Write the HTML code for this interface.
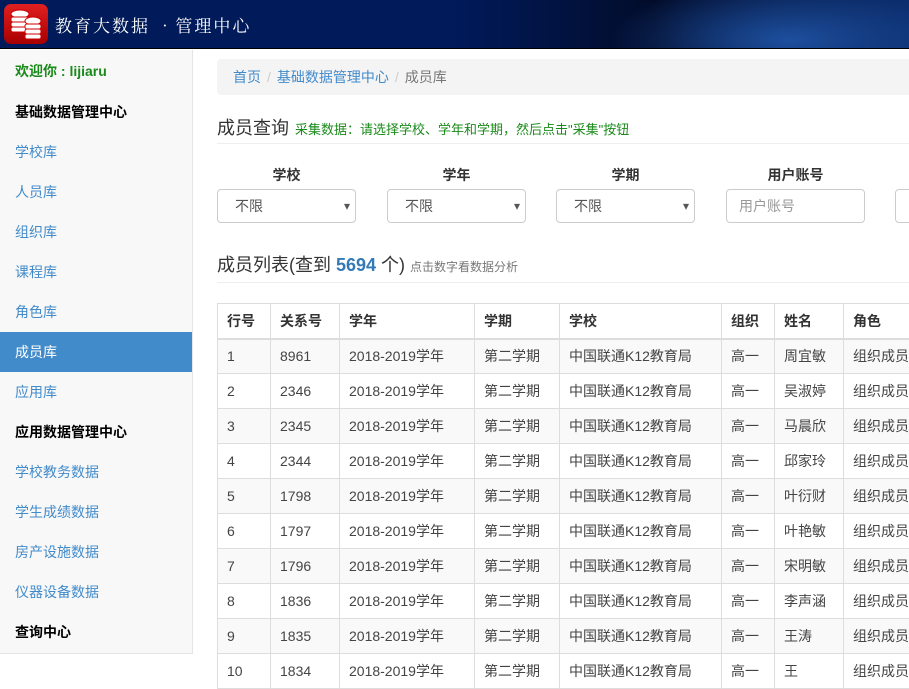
<!DOCTYPE html>
<html><head><meta charset="utf-8"><style>
*{box-sizing:border-box;margin:0;padding:0}
body{width:909px;height:658px;overflow:hidden;background:#fff;font-family:"Liberation Sans","Noto Sans CJK SC",sans-serif;font-size:14px;color:#333;position:relative}
.top{position:absolute;left:0;top:0;width:909px;height:49px;background:radial-gradient(ellipse 180px 60px at 790px 40px,#1d4f9e,transparent),linear-gradient(90deg,#001a5a 0,#001a5a 50%,#020c2a 72%,#0a2a6a 100%);border-bottom:1px solid #000}
.logo{position:absolute;left:4px;top:4px;width:44px;height:40px;border-radius:7px;background:linear-gradient(#e02020,#a80000)}
.ttl{position:absolute;left:55px;top:12px;color:#fff;font-family:"Noto Serif CJK SC",serif;font-size:17px;letter-spacing:2px}
.side{position:absolute;left:0;top:50px;width:193px;height:604px;background:#f8f8f8;border-right:1px solid #e5e5e5;border-bottom:1px solid #e5e5e5}
.side div{height:40px;line-height:40px;padding-left:15px;font-size:14px}
.side .h{font-weight:bold;color:#000}
.side .l{color:#428bca}
.side .a{background:#428bca;color:#fff}
.side .w{color:#1a8a1a;font-weight:bold;height:42px;line-height:42px}
.bc{position:absolute;left:217px;top:59px;width:700px;height:36px;background:#f4f4f4;border-radius:4px;line-height:36px;padding-left:16px;color:#428bca}
.bc span{color:#ccc;margin:0 6px}
.bc b{font-weight:normal;color:#777}
.h1{position:absolute;left:217px;top:114px;font-size:18px;color:#333}
.h1 small{font-size:13px;color:#1a8a1a;margin-left:6px}
.hr{position:absolute;left:217px;width:700px;border-top:1px solid #eee}
.lab{position:absolute;top:165px;font-weight:bold;font-size:14px;width:139px;text-align:center}
.sel{position:absolute;top:189px;height:34px;width:139px;border:1px solid #ccc;border-radius:4px;padding-left:17px;line-height:32px;color:#555}
.sel:after{content:"▾";position:absolute;right:5px;top:0;font-size:12px}
.ph{color:#999;padding-left:12px}
.sel.ph:after{content:""}
.h2{position:absolute;left:217px;top:251px;font-size:18px}
.h2 b{color:#337ab7}
.h2 small{font-size:12px;color:#777}
table{position:absolute;left:217px;top:303px;border-collapse:collapse;width:720px;table-layout:fixed}
td,th{border:1px solid #ddd;height:35px;padding-left:9px;text-align:left;font-size:14px;white-space:nowrap;overflow:hidden}
td{color:#444}
th{border-bottom:2px solid #ddd}
tbody tr:nth-child(odd){background:#f9f9f9}
</style></head><body>
<div class="top"><div class="logo"><svg width="44" height="40"><g fill="#fff" stroke="#c00" stroke-width="1"><ellipse cx="16" cy="10" rx="9" ry="4"/><rect x="7" y="13" width="18" height="5" rx="2"/><rect x="7" y="18" width="18" height="5" rx="2"/><rect x="7" y="23" width="18" height="5" rx="2"/><ellipse cx="29" cy="17" rx="8" ry="4"/><rect x="21" y="20" width="16" height="5" rx="2"/><rect x="21" y="25" width="16" height="5" rx="2"/><rect x="21" y="30" width="16" height="5" rx="2"/></g></svg></div><div class="ttl">教育大数据 •管理中心</div></div>
<div class="side">
<div class="w">欢迎你 : lijiaru</div>
<div class="h">基础数据管理中心</div>
<div class="l">学校库</div><div class="l">人员库</div><div class="l">组织库</div><div class="l">课程库</div><div class="l">角色库</div>
<div class="a">成员库</div><div class="l">应用库</div>
<div class="h">应用数据管理中心</div>
<div class="l">学校教务数据</div><div class="l">学生成绩数据</div><div class="l">房产设施数据</div><div class="l">仪器设备数据</div>
<div class="h">查询中心</div>
</div>
<div class="bc">首页<span>/</span>基础数据管理中心<span>/</span><b>成员库</b></div>
<div class="h1">成员查询<small>采集数据：请选择学校、学年和学期，然后点击"采集"按钮</small></div>
<div class="hr" style="top:143px"></div>
<div class="lab" style="left:217px">学校</div><div class="lab" style="left:387px">学年</div><div class="lab" style="left:556px">学期</div><div class="lab" style="left:726px">用户账号</div>
<div class="sel" style="left:217px">不限</div><div class="sel" style="left:387px">不限</div><div class="sel" style="left:556px">不限</div><div class="sel ph" style="left:726px">用户账号</div><div class="sel ph" style="left:895px"></div>
<div class="h2">成员列表(查到 <b>5694</b> 个) <small>点击数字看数据分析</small></div>
<div class="hr" style="top:282px"></div>
<table><colgroup><col style="width:53px"><col style="width:69px"><col style="width:135px"><col style="width:85px"><col style="width:162px"><col style="width:53px"><col style="width:69px"><col style="width:94px"></colgroup>
<thead><tr><th>行号</th><th>关系号</th><th>学年</th><th>学期</th><th>学校</th><th>组织</th><th>姓名</th><th>角色</th></tr></thead>
<tbody>
<tr><td>1</td><td>8961</td><td>2018-2019学年</td><td>第二学期</td><td>中国联通K12教育局</td><td>高一</td><td>周宜敏</td><td>组织成员</td></tr>
<tr><td>2</td><td>2346</td><td>2018-2019学年</td><td>第二学期</td><td>中国联通K12教育局</td><td>高一</td><td>吴淑婷</td><td>组织成员</td></tr>
<tr><td>3</td><td>2345</td><td>2018-2019学年</td><td>第二学期</td><td>中国联通K12教育局</td><td>高一</td><td>马晨欣</td><td>组织成员</td></tr>
<tr><td>4</td><td>2344</td><td>2018-2019学年</td><td>第二学期</td><td>中国联通K12教育局</td><td>高一</td><td>邱家玲</td><td>组织成员</td></tr>
<tr><td>5</td><td>1798</td><td>2018-2019学年</td><td>第二学期</td><td>中国联通K12教育局</td><td>高一</td><td>叶衍财</td><td>组织成员</td></tr>
<tr><td>6</td><td>1797</td><td>2018-2019学年</td><td>第二学期</td><td>中国联通K12教育局</td><td>高一</td><td>叶艳敏</td><td>组织成员</td></tr>
<tr><td>7</td><td>1796</td><td>2018-2019学年</td><td>第二学期</td><td>中国联通K12教育局</td><td>高一</td><td>宋明敏</td><td>组织成员</td></tr>
<tr><td>8</td><td>1836</td><td>2018-2019学年</td><td>第二学期</td><td>中国联通K12教育局</td><td>高一</td><td>李声涵</td><td>组织成员</td></tr>
<tr><td>9</td><td>1835</td><td>2018-2019学年</td><td>第二学期</td><td>中国联通K12教育局</td><td>高一</td><td>王涛</td><td>组织成员</td></tr>
<tr><td>10</td><td>1834</td><td>2018-2019学年</td><td>第二学期</td><td>中国联通K12教育局</td><td>高一</td><td>王</td><td>组织成员</td></tr>
</tbody></table>
</body></html>
